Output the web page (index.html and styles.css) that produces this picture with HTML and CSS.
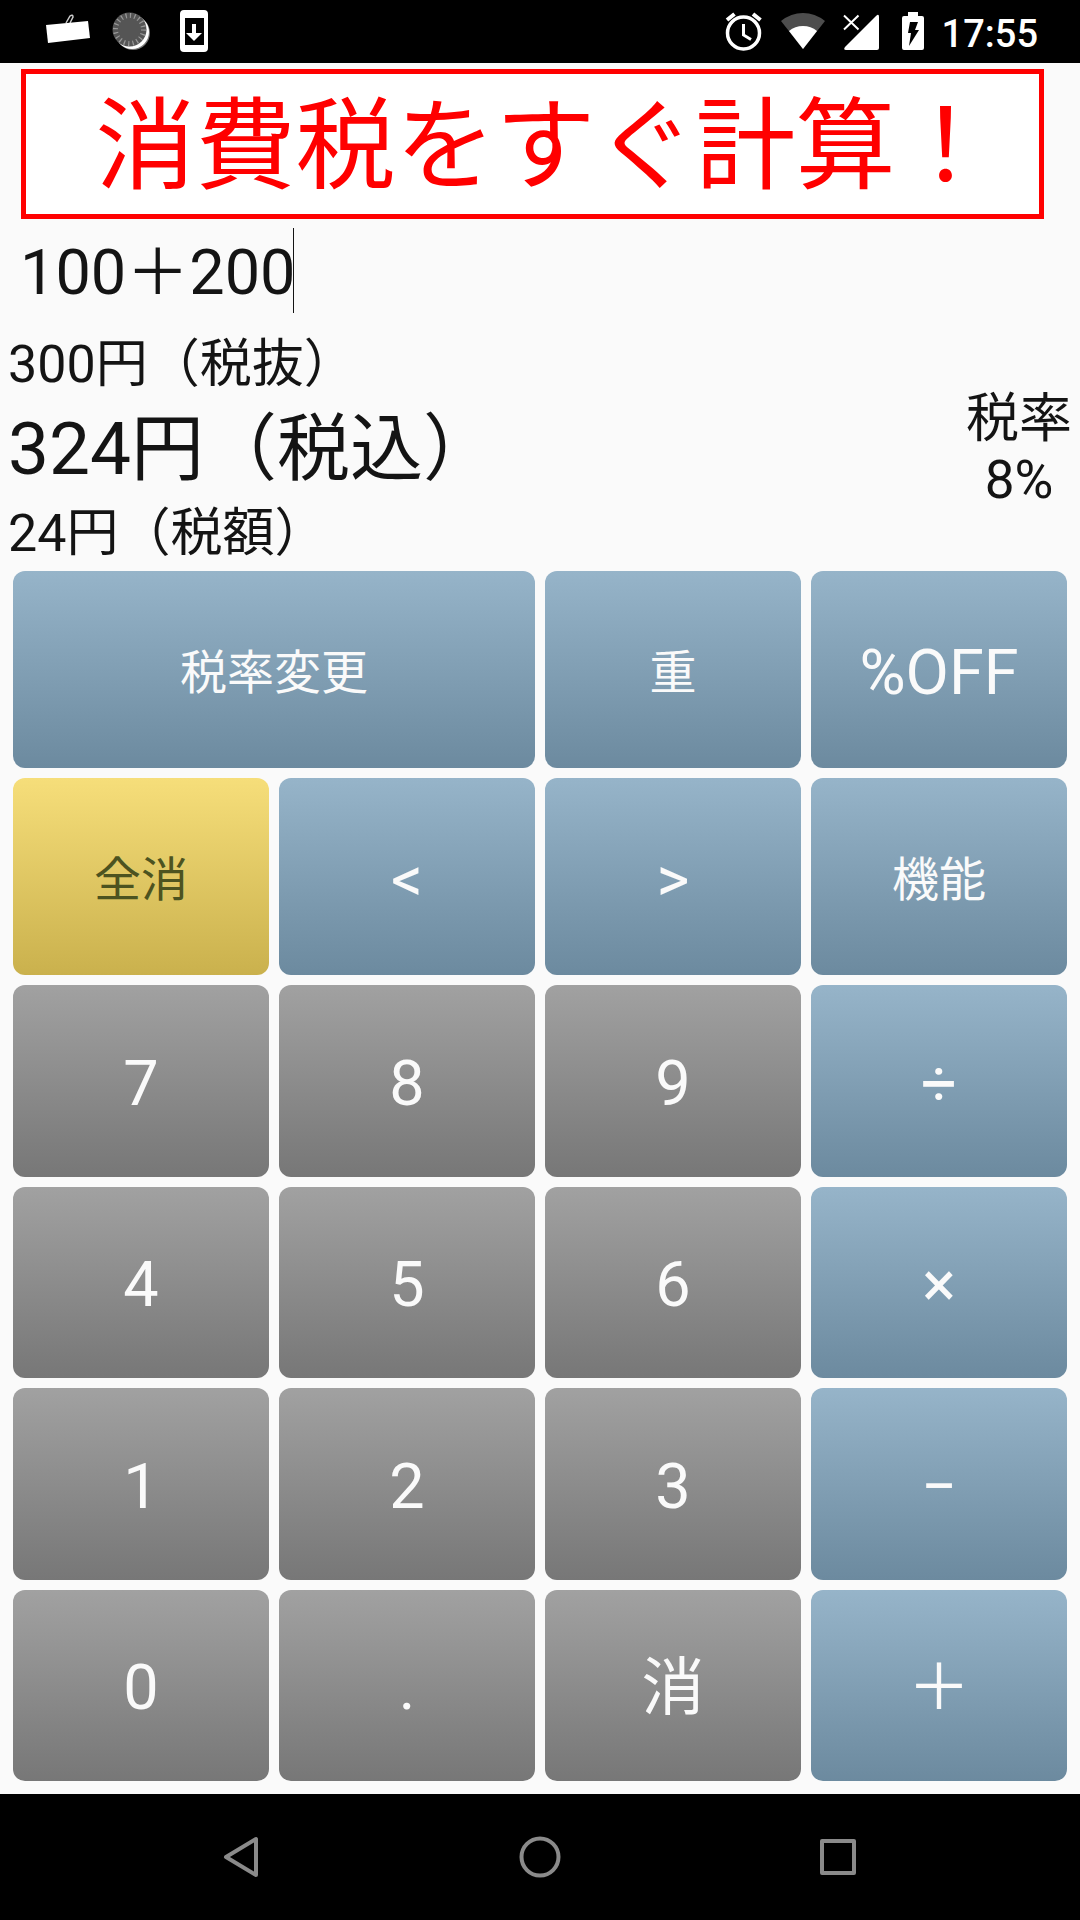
FILE: index.html
```html
<!DOCTYPE html>
<html lang="ja">
<head>
<meta charset="UTF-8">
<meta name="viewport" content="width=device-width, initial-scale=1">
<title>消費税計算</title>
<link rel="stylesheet" href="styles.css">
</head>
<body>
<header class="status-bar">
    <div class="notifications">
        <svg width="48" height="63" viewBox="0 0 48 63">
            <path d="M22 23l4-7q3-2 3 1l-3 6" fill="none" stroke="#ccc" stroke-width="1.5"/>
            <path d="M2 25L44 21L46 38L4 43Z" fill="#fff"/>
        </svg>
        <svg width="48" height="63" viewBox="0 0 48 63">
            <circle cx="26" cy="33" r="17" fill="#777"/>
            <circle cx="25" cy="32" r="17" fill="#fff"/>
            <circle cx="22.500" cy="29.500" r="17" fill="#555"/>
            <circle cx="22.500" cy="29.500" r="14" fill="none" stroke="#999" stroke-width="5" stroke-dasharray="1.200 3.198"/>
        </svg>
        <svg width="48" height="63" viewBox="0 0 48 63">
            <path fill="#fff" fill-rule="evenodd" d="M14 10h20q4 0 4 4v34q0 4-4 4h-20q-4 0-4-4v-34q0-4 4-4zM15 18v27h19v-27z"/>
            <path fill="#fff" d="M22 24h4v9h6l-8 8l-8-8h6z"/>
        </svg>
    </div>
    <div class="system">
        <svg width="48" height="63" viewBox="0 0 48 63">
            <g fill="none" stroke="#fff">
                <circle cx="23.500" cy="33" r="16" stroke-width="3.500"/>
                <path d="M23.500 24v11l7.500 4.500" stroke-width="3"/>
                <path d="M7 20l7.500-6M40.500 20l-7.500-6" stroke-width="4"/>
            </g>
        </svg>
        <svg width="48" height="63" viewBox="0 0 48 63">
            <path fill="#4d4d4d" d="M24 49L2 21Q12 13 24 13T46 21Z"/>
            <path fill="#fff" d="M24 49L10 31Q16 26 24 26T38 31Z"/>
        </svg>
        <svg width="48" height="63" viewBox="0 0 48 63">
            <path fill="#fff" d="M41 17v31q0 2-2 2h-31q-3 0-1-3L38 16q3-3 3 1z"/>
            <path d="M6 15.500l14.500 14M20.500 15.500L6 29.500" fill="none" stroke="#000" stroke-width="6"/>
            <path d="M6 15.500l14.500 14M20.500 15.500L6 29.500" fill="none" stroke="#fff" stroke-width="2"/>
        </svg>
        <svg width="34" height="63" viewBox="0 0 34 63">
            <path fill="#fff" d="M11 12h10v4h4q2 0 2 2v30q0 2-2 2h-18q-2 0-2-2v-30q0-2 2-2h4z"/>
            <path fill="#000" d="M13 22h8l-3 8h4l-10 16l2-13h-3z"/>
        </svg>
        <span class="clock">17:55</span>
    </div>
</header>

<main class="calculator">
    <h1 class="banner">消費税をすぐ計算！</h1>

    <div class="expression">
        <input type="text" class="expression-input" id="expression" value="100＋200" aria-label="計算式">
        <span class="cursor"></span>
    </div>

    <div class="result">
        <div class="amounts">
            <div class="amount">300円（税抜）</div>
            <div class="amount total">324円（税込）</div>
            <div class="amount">24円（税額）</div>
        </div>
        <div class="rate">
            <div>税率</div>
            <div>8%</div>
        </div>
    </div>

    <div class="keypad">
        <button class="key blue label wide">税率変更</button>
        <button class="key blue label">重</button>
        <button class="key blue">%OFF</button>

        <button class="key yellow label">全消</button>
        <button class="key blue">&lt;</button>
        <button class="key blue">&gt;</button>
        <button class="key blue label">機能</button>

        <button class="key">7</button>
        <button class="key">8</button>
        <button class="key">9</button>
        <button class="key blue">÷</button>

        <button class="key">4</button>
        <button class="key">5</button>
        <button class="key">6</button>
        <button class="key blue">×</button>

        <button class="key">1</button>
        <button class="key">2</button>
        <button class="key">3</button>
        <button class="key blue">−</button>

        <button class="key">0</button>
        <button class="key">.</button>
        <button class="key">消</button>
        <button class="key blue">＋</button>
    </div>
</main>

<nav class="nav-bar">
    <button class="nav-button" aria-label="戻る">
        <svg width="48" height="48" viewBox="0 0 48 48"><path d="M38 6v36L8 24Z"/></svg>
    </button>
    <button class="nav-button" aria-label="ホーム">
        <svg width="48" height="48" viewBox="0 0 48 48"><circle cx="24" cy="24" r="18.500"/></svg>
    </button>
    <button class="nav-button" aria-label="履歴">
        <svg width="48" height="48" viewBox="0 0 48 48"><rect x="8" y="8" width="32" height="32"/></svg>
    </button>
</nav>
</body>
</html>
```
FILE: styles.css
```css
* {
    box-sizing: border-box;
}
body {
    margin: 0;
    min-height: 100vh;
    display: flex;
    flex-direction: column;
    font-family: Roboto, "Noto Sans CJK JP", sans-serif;
    background-color: #fafafa;
    color: #141414;
}
button, input {
    font-family: inherit;
    border: none;
    padding: 0;
}
svg {
    display: block;
}

/* Status bar */
.status-bar {
    display: flex;
    justify-content: space-between;
    height: 63px;
    padding: 0 42px 0 44px;
    background-color: #000;
    color: #fff;
}
.notifications {
    display: flex;
    gap: 15px;
}
.system {
    display: flex;
    align-items: center;
    gap: 11px;
}
.clock {
    font-size: 38px;
    font-weight: 500;
    line-height: 57px;
    padding-top: 6px;
}

/* Calculator */
.calculator {
    flex: 1;
    display: flex;
    flex-direction: column;
}
.banner {
    margin: 6px 36px 0 21px;
    padding: 6px 0 0 26px;
    border: 5px solid #f00;
    background-color: #fff;
    color: #f00;
    font-size: 100px;
    font-weight: 400;
    line-height: 134px;
    text-align: center;
    white-space: nowrap;
}
.expression {
    display: flex;
    height: 108px;
    padding-left: 20px;
}
.expression-input {
    width: 275px;
    height: 108px;
    field-sizing: content;
    background: none;
    color: inherit;
    font-size: 63px;
    line-height: 108px;
    outline: none;
}
.cursor {
    width: 1px;
    height: 85px;
    margin: 9px 0 0 -2px;
    background-color: #141414;
}
.result {
    display: flex;
    justify-content: space-between;
    align-items: center;
    padding: 1px 8px 0;
}
.amount {
    font-size: 52px;
    line-height: 74px;
}
.amount.total {
    font-size: 73px;
    line-height: 95px;
}
.rate {
    font-size: 53px;
    line-height: 61px;
    text-align: center;
}

/* Keypad */
.keypad {
    flex: 1;
    display: grid;
    grid-template-columns: repeat(4, 1fr);
    grid-template-rows: repeat(2, 197px) repeat(4, 1fr);
    gap: 10px;
    padding: 0 13px 13px;
}
.key {
    padding-top: 6px;
    border-radius: 12px;
    background: linear-gradient(#a1a1a1, #777);
    color: #fafafa;
    font-size: 63px;
    line-height: 74px;
    cursor: pointer;
}
.key.blue {
    background: linear-gradient(#96b4c9, #6c8a9f);
}
.key.yellow {
    background: linear-gradient(#f6de7a, #cab14d);
    color: #4c5320;
}
.key.label {
    font-size: 47px;
}
.key.wide {
    grid-column: span 2;
}

/* Navigation bar */
.nav-bar {
    display: flex;
    justify-content: center;
    height: 126px;
    background-color: #000;
}
.nav-button {
    width: 298px;
    display: flex;
    align-items: center;
    justify-content: center;
    background: none;
    cursor: pointer;
}
.nav-button svg {
    fill: none;
    stroke: #8a8a8a;
    stroke-width: 4;
    stroke-linejoin: round;
}
```
